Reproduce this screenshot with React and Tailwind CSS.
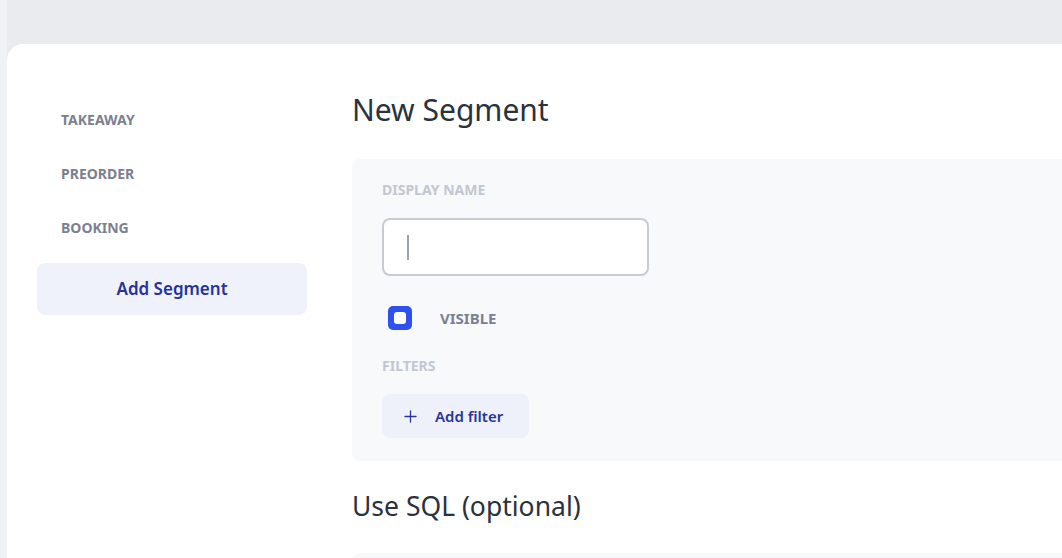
import { Plus } from "lucide-react";

const segments = ["TAKEAWAY", "PREORDER", "BOOKING"];

const Sidebar = () => (
  <aside className="w-[300px] shrink-0 pl-[30px] pt-[48px]">
    <ul className="flex flex-col">
      {segments.map((name) => (
        <li
          key={name}
          className="h-[54px] flex items-center pl-[24px] text-[14px] font-bold text-[#7b8090]"
        >
          {name}
        </li>
      ))}
    </ul>
    <button className="mt-[9px] w-[270px] h-[52px] rounded-[8px] bg-[#eff2fa] text-[17px] font-semibold text-[#24339a]">
      Add Segment
    </button>
  </aside>
);

const App = () => {
  return (
    <div
      className="min-h-screen h-[558px] overflow-hidden bg-[#e9ebef] flex"
      style={{ fontFamily: '"Noto Sans", "Open Sans", sans-serif' }}
    >
      <div className="w-[7px] shrink-0 bg-[#eff1f4]" />
      <div className="flex-1 flex flex-col">
        <div className="h-[44px] shrink-0" />
        <div className="flex-1 bg-white rounded-tl-[16px] flex">
          <Sidebar />
          <main className="flex-1 pl-[45px] pt-[46px]">
            <h1 className="text-[30px] leading-[40px] text-[#2a323d]">
              New Segment
            </h1>
            <section className="mt-[29px] rounded-l-[8px] bg-[#f8f9fb] pl-[30px] pt-[22px] pb-[23px]">
              <label className="block text-[14px] font-bold text-[#c2c7d2] leading-[18px]">
                DISPLAY NAME
              </label>
              <div className="mt-[19px] w-[267px] h-[58px] rounded-[8px] border-2 border-[#c8cbd1] bg-white flex items-center pl-[23px]">
                <span className="block w-[2px] h-[25px] bg-[#9aa1ad]" />
              </div>
              <div className="mt-[30px] flex items-center h-[24px] pl-[6px]">
                <span className="w-[24px] h-[24px] rounded-[5px] bg-[#2d50ef] flex items-center justify-center">
                  <span className="w-[12px] h-[12px] rounded-[3px] bg-white" />
                </span>
                <span className="ml-[28px] text-[15px] font-bold text-[#7b8090]">
                  VISIBLE
                </span>
              </div>
              <label className="block mt-[27px] text-[14px] font-bold text-[#c2c7d2] leading-[18px]">
                FILTERS
              </label>
              <button className="mt-[19px] h-[44px] w-[147px] rounded-[8px] bg-[#eef1fa] flex items-center pl-[19px] text-[#26359a]">
                <Plus size={19} strokeWidth={1.6} />
                <span className="ml-[15px] text-[15px] font-semibold">Add filter</span>
              </button>
            </section>
            <h2 className="mt-[27px] text-[26.5px] leading-[36px] text-[#2a323d]">
              Use SQL (optional)
            </h2>
            <div className="mt-[29px] h-[40px] rounded-l-[8px] bg-[#f8f9fb]" />
          </main>
        </div>
      </div>
    </div>
  );
};

export default App;
